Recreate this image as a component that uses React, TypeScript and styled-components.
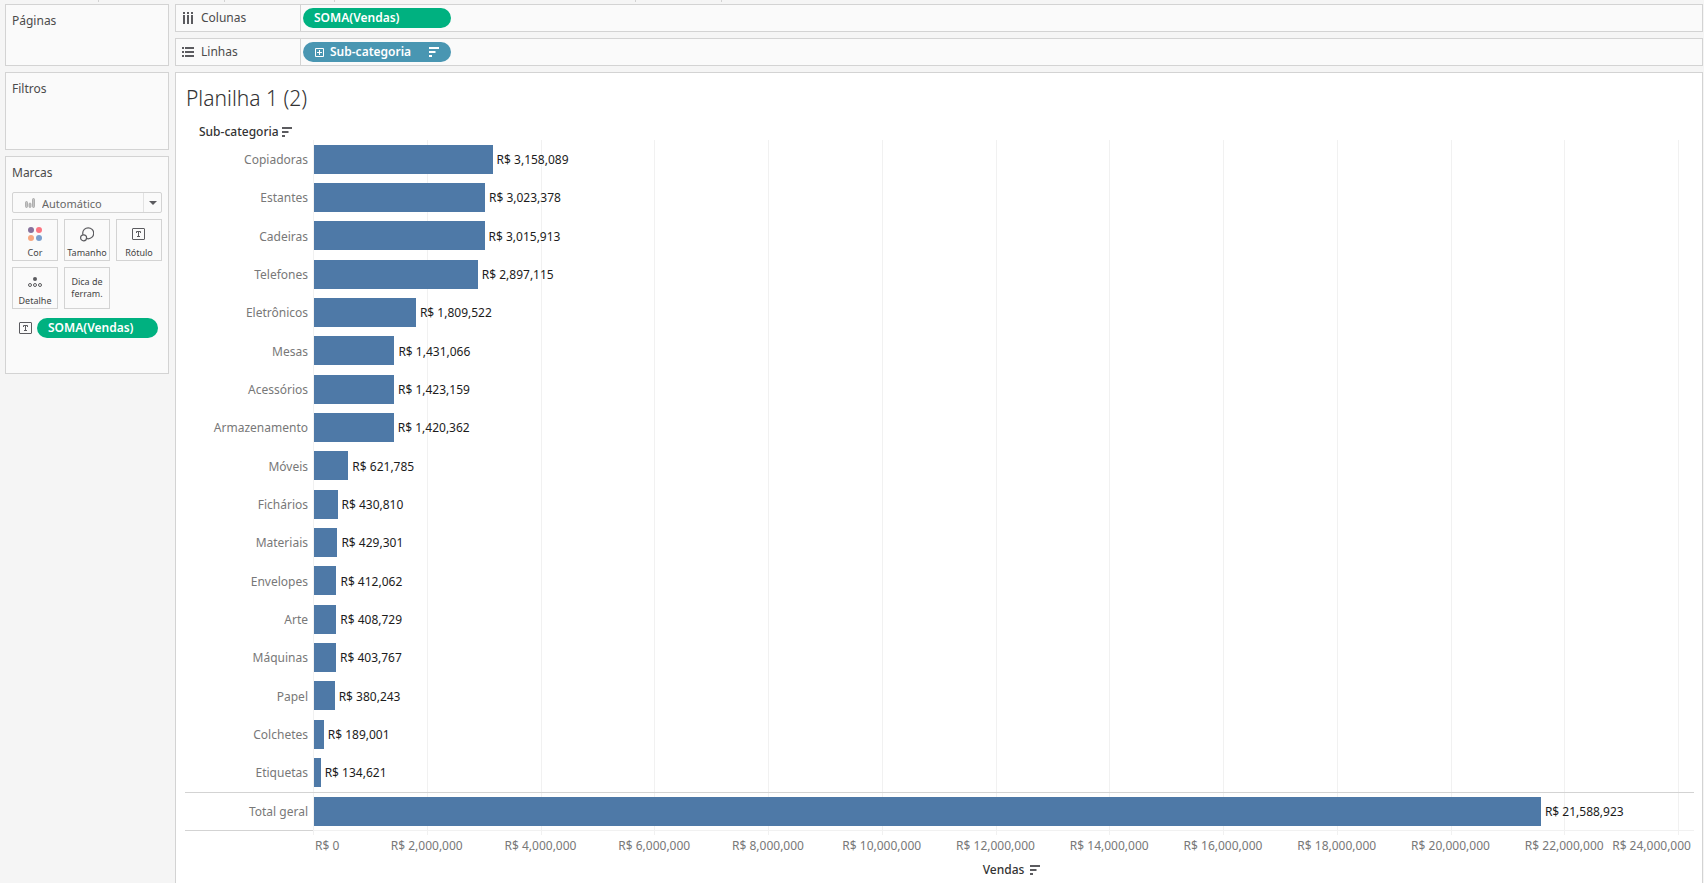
import React from 'react';
import styled, { createGlobalStyle } from 'styled-components';

const ui = "'Noto Sans', 'Open Sans', sans-serif";
const line = '#d3d3d3';
const faint = '#f1f1f1';
const ink = '#5b5b5f';

const GlobalStyle = createGlobalStyle`
  *, *::before, *::after { box-sizing: border-box; }
  body { margin: 0; background: #f5f5f5; font-family: ${ui}; font-size: 12px; line-height: 16px; color: #4b4b4b; }
  h1, h2, ul { margin: 0; padding: 0; font-weight: 400; list-style: none; }
  button, select { font-family: inherit; margin: 0; }
  svg { display: block; flex: none; }
`;

const Page = styled.div`
  min-height: 100vh;
  display: flex;
  flex-direction: column;
`;

const TopEdge = styled.div`
  flex: none;
  height: 4px;
  display: flex;
  align-items: flex-start;
  padding-left: 98px;
`;

const EdgeTick = styled.i<{ $gap: number }>`
  width: 1px;
  height: 2px;
  margin-right: ${(p) => p.$gap}px;
  background: ${line};
`;

const Workspace = styled.div`
  flex: 1;
  display: grid;
  grid-template-columns: 164px minmax(0, 1fr);
  column-gap: 6px;
  padding: 0 1px 0 5px;
`;

const Sidebar = styled.aside`
  display: flex;
  flex-direction: column;
  gap: 6px;
`;

const Main = styled.main`
  display: flex;
  flex-direction: column;
  gap: 6px;
`;

const Card = styled.section<{ $height: number }>`
  min-height: ${(p) => p.$height}px;
  padding: 8px 6px 7px;
  border: 1px solid ${line};
  background: #fafafa;
`;

const CardTitle = styled.h2`
  font-size: 12px;
  line-height: 16px;
`;

const MarkType = styled.div`
  display: grid;
  height: 21px;
  margin: 11px 0 6px;
  align-items: center;
  > * { grid-area: 1 / 1; }
  > svg { pointer-events: none; margin-left: 13px; z-index: 1; }
`;

const MarkSelect = styled.select`
  width: 100%;
  height: 21px;
  padding: 1px 0 0 29px;
  appearance: none;
  border: 1px solid ${line};
  border-radius: 2px;
  background: #fafafa;
  color: #666;
  font-size: 11px;
`;

const SelectArrow = styled.span`
  justify-self: end;
  display: flex;
  align-items: center;
  justify-content: center;
  width: 19px;
  height: 19px;
  border-left: 1px solid #e2e2e2;
  pointer-events: none;
  z-index: 1;
`;

const MarkGrid = styled.div`
  display: grid;
  grid-template-columns: repeat(3, 1fr);
  gap: 6px;
`;

const MarkButton = styled.button`
  height: 42px;
  padding: 6px 0 0;
  display: flex;
  flex-direction: column;
  align-items: center;
  gap: 5px;
  border: 1px solid ${line};
  background: #fafafa;
  color: #444;
  font-size: 9px;
  line-height: 12px;
`;

const ButtonText = styled.span`
  padding-top: 2px;
`;

const MarkPillRow = styled.div`
  display: flex;
  align-items: center;
  gap: 5px;
  margin-top: 9px;
  padding: 0 4px 0 7px;
`;

const Pill = styled.button<{ $tone: string; $width?: number }>`
  display: flex;
  align-items: center;
  height: 20px;
  ${(p) => (p.$width ? `width: ${p.$width}px;` : 'flex: 1;')}
  padding: 0 12px 0 11px;
  border: 0;
  border-radius: 10px;
  background: ${(p) => p.$tone};
  color: #fff;
  font-size: 12px;
  font-weight: 600;
  line-height: 16px;
  text-align: left;
`;

const PillText = styled.span`
  flex: 1;
  svg + & { margin-left: 6px; }
`;

const Shelf = styled.section`
  display: flex;
  height: 28px;
  border: 1px solid ${line};
  background: #fafafa;
`;

const ShelfName = styled.div`
  display: flex;
  align-items: center;
  gap: 7px;
  width: 125px;
  padding-left: 6px;
  border-right: 1px solid ${line};
`;

const ShelfBody = styled.div`
  display: flex;
  align-items: center;
  padding-left: 2px;
`;

const Sheet = styled.section`
  flex: 1;
  display: flex;
  flex-direction: column;
  padding: 0 8px 0 9px;
  border: 1px solid ${line};
  border-bottom: 0;
  background: #fff;
`;

const SheetTitle = styled.h1`
  height: 50px;
  padding-left: 1px;
  font-size: 21px;
  font-weight: 300;
  line-height: 50px;
  color: #333;
`;

const FieldHeader = styled.div`
  display: flex;
  align-items: center;
  gap: 3px;
  height: 17px;
  padding-left: 14px;
  color: #333;
  font-weight: 500;
`;

const Plot = styled.div`
  flex: 1;
  display: grid;
  grid-template-columns: 128px minmax(0, 1fr);
  grid-template-rows: minmax(0, 1fr) 5px;
`;

const GridLines = styled.div`
  grid-area: 1 / 2 / 3 / 3;
  display: flex;
`;

const GridLine = styled.i`
  flex: none;
  border-left: 1px solid ${faint};
`;

const Rule = styled.div<{ $color: string; $column: number }>`
  grid-area: 2 / ${(p) => p.$column};
  border-top: 1px solid ${(p) => p.$color};
`;

const Rows = styled.ul`
  grid-area: 1 / 1 / 2 / 3;
  display: grid;
  grid-auto-rows: minmax(30px, 1fr);
`;

const Row = styled.li`
  display: grid;
  grid-template-columns: 128px minmax(0, 1fr);
  align-items: center;
  &:last-child { border-top: 1px solid ${line}; }
`;

const RowName = styled.span`
  padding: 2px 5px 0 0;
  text-align: right;
  color: #787878;
`;

const Track = styled.div`
  display: flex;
  align-items: center;
  gap: 4px;
`;

const Bar = styled.span`
  flex: none;
  height: 29px;
  border-left: 1px solid ${faint};
  background: #4e79a7;
`;

const Value = styled.span`
  padding-top: 2px;
  color: #1c1c1c;
  white-space: nowrap;
`;

const Axis = styled.div`
  display: flex;
  height: 22px;
  margin-left: 128px;
  align-items: center;
  color: #787878;
`;

const AxisLabel = styled.span<{ $place?: 'start' | 'end' }>`
  flex: none;
  display: flex;
  justify-content: ${(p) => (p.$place ? `flex-${p.$place}` : 'center')};
  padding: ${(p) => (p.$place === 'start' ? '0 0 0 2px' : p.$place === 'end' ? '0 3px 0 0' : '0')};
  white-space: nowrap;
`;

const AxisTitle = styled.div`
  display: flex;
  align-items: center;
  justify-content: center;
  gap: 6px;
  height: 26px;
  margin-left: 128px;
  padding-left: 16px;
  color: #333;
  font-weight: 500;
`;

const SortIcon = ({ color = ink }: { color?: string }) => (
  <svg width="10" height="10" fill={color} aria-hidden="true">
    <path d="M0 0h10v2H0zM0 4h6.5v2H0zM0 8h3v2H0z" />
  </svg>
);

const ColumnsIcon = () => (
  <svg width="12" height="12" fill={ink} aria-hidden="true">
    <path d="M1 0h2v2H1zM5 0h2v2H5zM9 0h2v2H9zM1 3h2v9H1zM5 3h2v9H5zM9 3h2v9H9z" />
  </svg>
);

const RowsIcon = () => (
  <svg width="12" height="10" fill={ink} aria-hidden="true">
    <path d="M0 0h2v2H0zM0 4h2v2H0zM0 8h2v2H0zM3 0h9v2H3zM3 4h9v2H3zM3 8h9v2H3z" />
  </svg>
);

const PlusBoxIcon = () => (
  <svg width="10" height="9" fill="none" stroke="#fff" aria-hidden="true">
    <path d="M1.5.5h8v8h-8zM5.500 2v5M3 4.500h5" />
  </svg>
);

const TextIcon = () => (
  <svg width="13" height="12" fill="none" stroke={ink} aria-hidden="true">
    <rect x=".5" y=".5" width="12" height="11" rx=".5" />
    <path d="M4.500 5V3.500h4V5M6.500 3.500v5M5 8.500h3" />
  </svg>
);

const BarsIcon = () => (
  <svg width="10" height="10" fill="#c4c4c4" stroke="#a2a2a2" strokeWidth=".8" aria-hidden="true">
    <rect x=".5" y="3.500" width="2" height="6" rx="1" />
    <rect x="4" y="5" width="2" height="4.500" rx="1" />
    <rect x="7.500" y=".5" width="2" height="9" rx="1" />
  </svg>
);

const ColorIcon = () => (
  <svg width="14" height="16" aria-hidden="true">
    <circle cx="3" cy="4" r="3" fill="#87719c" />
    <circle cx="11" cy="4" r="3" fill="#fb7481" />
    <circle cx="3" cy="12" r="3" fill="#f7a780" />
    <circle cx="11" cy="12" r="3" fill="#7a9fce" />
  </svg>
);

const SizeIcon = () => (
  <svg width="14" height="16" stroke={ink} strokeWidth="1.2" aria-hidden="true">
    <circle cx="8.200" cy="7.300" r="5.500" fill="none" />
    <circle cx="3.600" cy="11.800" r="3" fill="#fafafa" />
  </svg>
);

const LabelIcon = () => (
  <svg width="14" height="16" fill="none" stroke={ink} aria-hidden="true">
    <rect x=".5" y="2.500" width="12" height="11" rx=".5" />
    <path d="M4.500 7V5.500h4V7M6.500 5.500v5M5 10.500h3" />
  </svg>
);

const DetailIcon = () => (
  <svg width="14" height="16" fill="none" stroke={ink} aria-hidden="true">
    <circle cx="7" cy="5" r="2" fill={ink} stroke="none" />
    <circle cx="2" cy="11" r="1.500" />
    <circle cx="7" cy="11" r="1.500" />
    <circle cx="12" cy="11" r="1.500" />
  </svg>
);

const rows: [string, number][] = [
  ['Copiadoras', 3158089],
  ['Estantes', 3023378],
  ['Cadeiras', 3015913],
  ['Telefones', 2897115],
  ['Eletrônicos', 1809522],
  ['Mesas', 1431066],
  ['Acessórios', 1423159],
  ['Armazenamento', 1420362],
  ['Móveis', 621785],
  ['Fichários', 430810],
  ['Materiais', 429301],
  ['Envelopes', 412062],
  ['Arte', 408729],
  ['Máquinas', 403767],
  ['Papel', 380243],
  ['Colchetes', 189001],
  ['Etiquetas', 134621],
  ['Total geral', 21588923],
];

const axisMax = 24281000;
const step = 2000000;
const ticks = Array.from({ length: 13 }, (_, i) => i * step);
const pct = (n: number) => `${(n / axisMax) * 100}%`;
const money = (n: number) => `R$ ${n.toLocaleString('en-US')}`;

const axisWidth = (tick: number) =>
  tick === 0 ? pct(step / 2) : tick === 24000000 ? pct(axisMax - 23000000) : pct(step);
const axisPlace = (tick: number) => (tick === 0 ? 'start' : tick === 24000000 ? 'end' : undefined);

export default function App() {
  return (
    <>
      <GlobalStyle />
      <Page>
        <TopEdge>
          {[125, 109, 300, 85, 0].map((gap, i) => (
            <EdgeTick key={i} $gap={gap} />
          ))}
        </TopEdge>
        <Workspace>
          <Sidebar>
            <Card $height={62}>
              <CardTitle>Páginas</CardTitle>
            </Card>
            <Card $height={78}>
              <CardTitle>Filtros</CardTitle>
            </Card>
            <Card $height={218}>
              <CardTitle>Marcas</CardTitle>
              <MarkType>
                <MarkSelect aria-label="Tipo de marca">
                  <option>Automático</option>
                </MarkSelect>
                <BarsIcon />
                <SelectArrow>
                  <svg width="8" height="4" fill="#5b5b5f" aria-hidden="true">
                    <path d="M0 0h8L4 4z" />
                  </svg>
                </SelectArrow>
              </MarkType>
              <MarkGrid>
                <MarkButton><ColorIcon />Cor</MarkButton>
                <MarkButton><SizeIcon />Tamanho</MarkButton>
                <MarkButton><LabelIcon />Rótulo</MarkButton>
                <MarkButton><DetailIcon />Detalhe</MarkButton>
                <MarkButton><ButtonText>Dica de<br />ferram.</ButtonText></MarkButton>
              </MarkGrid>
              <MarkPillRow>
                <TextIcon />
                <Pill $tone="#00b180"><PillText>SOMA(Vendas)</PillText></Pill>
              </MarkPillRow>
            </Card>
          </Sidebar>
          <Main>
            <Shelf>
              <ShelfName><ColumnsIcon />Colunas</ShelfName>
              <ShelfBody>
                <Pill $tone="#00b180" $width={148}><PillText>SOMA(Vendas)</PillText></Pill>
              </ShelfBody>
            </Shelf>
            <Shelf>
              <ShelfName><RowsIcon />Linhas</ShelfName>
              <ShelfBody>
                <Pill $tone="#4996b2" $width={148}>
                  <PlusBoxIcon />
                  <PillText>Sub-categoria</PillText>
                  <SortIcon color="#fff" />
                </Pill>
              </ShelfBody>
            </Shelf>
            <Sheet>
              <SheetTitle>Planilha 1 (2)</SheetTitle>
              <FieldHeader>Sub-categoria<SortIcon /></FieldHeader>
              <Plot>
                <GridLines aria-hidden="true">
                  {ticks.map((t) => (
                    <GridLine key={t} style={{ width: t === 24000000 ? 1 : pct(step) }} />
                  ))}
                </GridLines>
                <Rule $color={line} $column={1} />
                <Rule $color={faint} $column={2} />
                <Rows>
                  {rows.map(([name, value]) => (
                    <Row key={name}>
                      <RowName>{name}</RowName>
                      <Track>
                        <Bar style={{ width: pct(value) }} />
                        <Value>{money(value)}</Value>
                      </Track>
                    </Row>
                  ))}
                </Rows>
              </Plot>
              <Axis>
                {ticks.map((t) => (
                  <AxisLabel key={t} $place={axisPlace(t)} style={{ width: axisWidth(t) }}>
                    {money(t)}
                  </AxisLabel>
                ))}
              </Axis>
              <AxisTitle>Vendas<SortIcon /></AxisTitle>
            </Sheet>
          </Main>
        </Workspace>
      </Page>
    </>
  );
}
